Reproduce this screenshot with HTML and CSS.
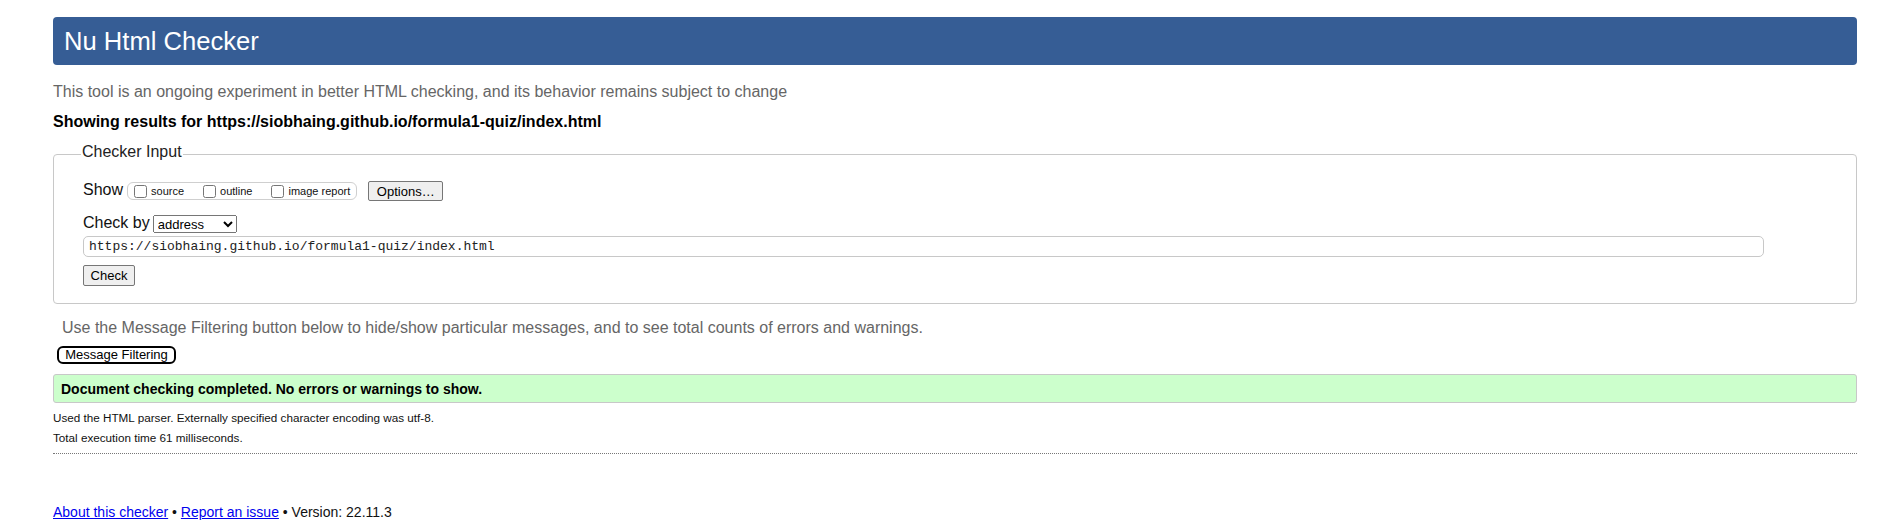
FILE: index.html
```html
<!DOCTYPE html>
<html lang="en">
<head>
<meta charset="utf-8">
<title>Nu Html Checker</title>
<link rel="stylesheet" href="styles.css">
</head>
<body>
<h1 class="title">Nu Html Checker</h1>
<p class="intro">This tool is an ongoing experiment in better HTML checking, and its behavior remains subject to change</p>
<p class="results-for">Showing results for https://siobhaing.github.io/formula1-quiz/index.html</p>
<form class="input-form">
  <fieldset class="input-region">
    <legend class="input-legend">Checker Input</legend>
    <div class="row row-show">
      <span class="row-label">Show</span>
      <span class="show-group">
        <label class="opt"><input type="checkbox" class="cb"><span>source</span></label>
        <label class="opt"><input type="checkbox" class="cb"><span>outline</span></label>
        <label class="opt"><input type="checkbox" class="cb"><span>image report</span></label>
      </span>
      <button type="button" class="btn btn-options">Options…</button>
    </div>
    <div class="row row-checkby">
      <span class="row-label">Check by</span>
      <select class="select"><option>address</option></select>
    </div>
    <div class="row row-url">
      <input class="url" type="text" value="https://siobhaing.github.io/formula1-quiz/index.html">
    </div>
    <div class="row row-submit">
      <button type="button" class="btn btn-check">Check</button>
    </div>
  </fieldset>
</form>
<p class="filter-note">Use the Message Filtering button below to hide/show particular messages, and to see total counts of errors and warnings.</p>
<button type="button" class="btn-filter">Message Filtering</button>
<p class="success">Document checking completed. No errors or warnings to show.</p>
<p class="details">Used the HTML parser. Externally specified character encoding was utf-8.</p>
<p class="details details-last">Total execution time 61 milliseconds.</p>
<p class="footer"><a href="#">About this checker</a> • <a href="#">Report an issue</a> • Version: 22.11.3</p>
</body>
</html>
```

FILE: styles.css
```css
html {
  background: #fff;
}

body {
  margin: 0;
  padding: 0 26px 0 53px;
  font-family: "Liberation Sans", Arial, sans-serif;
  color: #000;
}

.title {
  margin: 17px 0 0;
  height: 48px;
  line-height: 48px;
  padding: 0 11px;
  font-size: 25.6px;
  font-weight: normal;
  background: #365d95;
  color: #fff;
  border-radius: 4px;
}

.intro {
  margin: 18px 0 0;
  font-size: 16px;
  line-height: 18px;
  color: #666;
}

.results-for {
  margin: 12px 0 0;
  font-size: 16px;
  line-height: 18px;
  font-weight: bold;
}

.input-form {
  margin: 12px 0 0;
}

.input-region {
  margin: 0;
  min-width: 0;
  padding: 16px 20px 17px 29px;
  border: 1px solid #c8c8c8;
  border-radius: 4px;
}

.input-legend {
  margin-left: -2px;
  padding: 0 1px 4px;
  font-size: 16px;
  line-height: 18px;
  color: #222;
}

.row {
  display: flex;
  align-items: center;
}

.row-label {
  font-size: 16px;
  line-height: 18px;
  padding-bottom: 3px;
  color: #111;
}

.row-show {
  height: 20px;
}

.show-group {
  display: inline-flex;
  align-items: center;
  box-sizing: border-box;
  height: 18px;
  margin-left: 4px;
  padding: 0 6px 0 6px;
  border: 1px solid #cfcfcf;
  border-radius: 6px;
}

.opt {
  display: inline-flex;
  align-items: center;
  font-size: 11px;
  line-height: 13px;
  margin-right: 19px;
  color: #111;
}

.opt:last-child {
  margin-right: 0;
}

.cb {
  margin: 0 4px 0 0;
  width: 13px;
  height: 13px;
}

.btn {
  box-sizing: border-box;
  padding: 0;
  font-family: "Liberation Sans", Arial, sans-serif;
  font-size: 13px;
  color: #000;
  background: #efefef;
  border: 1px solid #767676;
  border-radius: 2px;
}

.btn-options {
  width: 75px;
  height: 20px;
  margin-left: 11px;
}

.row-checkby {
  height: 18px;
  margin-top: 14px;
}

.row-checkby .row-label {
  padding-bottom: 2px;
}

.select {
  box-sizing: border-box;
  width: 84px;
  height: 18px;
  margin-left: 3px;
  font-family: "Liberation Sans", Arial, sans-serif;
  font-size: 13px;
  color: #000;
}

.row-url {
  margin-top: 3px;
}

.url {
  box-sizing: border-box;
  width: 1681px;
  height: 21px;
  padding: 0 5px;
  border: 1px solid #c8c8c8;
  border-radius: 5px;
  font-family: "Liberation Mono", monospace;
  font-size: 13px;
  color: #222;
}

.row-submit {
  margin-top: 8px;
}

.btn-check {
  width: 52px;
  height: 21px;
}

.filter-note {
  margin: 15px 0 0;
  padding-left: 9px;
  font-size: 16px;
  line-height: 18px;
  color: #666;
}

.btn-filter {
  display: block;
  box-sizing: border-box;
  width: 119px;
  height: 18px;
  margin: 9px 0 0 4px;
  padding: 0;
  font-family: "Liberation Sans", Arial, sans-serif;
  font-size: 13px;
  line-height: 14px;
  color: #000;
  background: #fff;
  border: 2px solid #000;
  border-radius: 6px;
}

.success {
  box-sizing: border-box;
  height: 29px;
  margin: 10px 0 0;
  padding: 6px 7px 5px;
  font-size: 14px;
  line-height: 16px;
  font-weight: bold;
  background: #ccffcc;
  border: 1px solid #c8c8c8;
  border-radius: 3px;
}

.details {
  margin: 8px 0 0;
  font-size: 11.7px;
  line-height: 14px;
  color: #111;
}

.details-last {
  margin-top: 6px;
  padding-bottom: 8px;
  border-bottom: 1px dotted #777;
}

.footer {
  margin: 50px 0 0;
  font-size: 14px;
  line-height: 16px;
  color: #111;
}

.footer a {
  color: #0000ee;
}
```
